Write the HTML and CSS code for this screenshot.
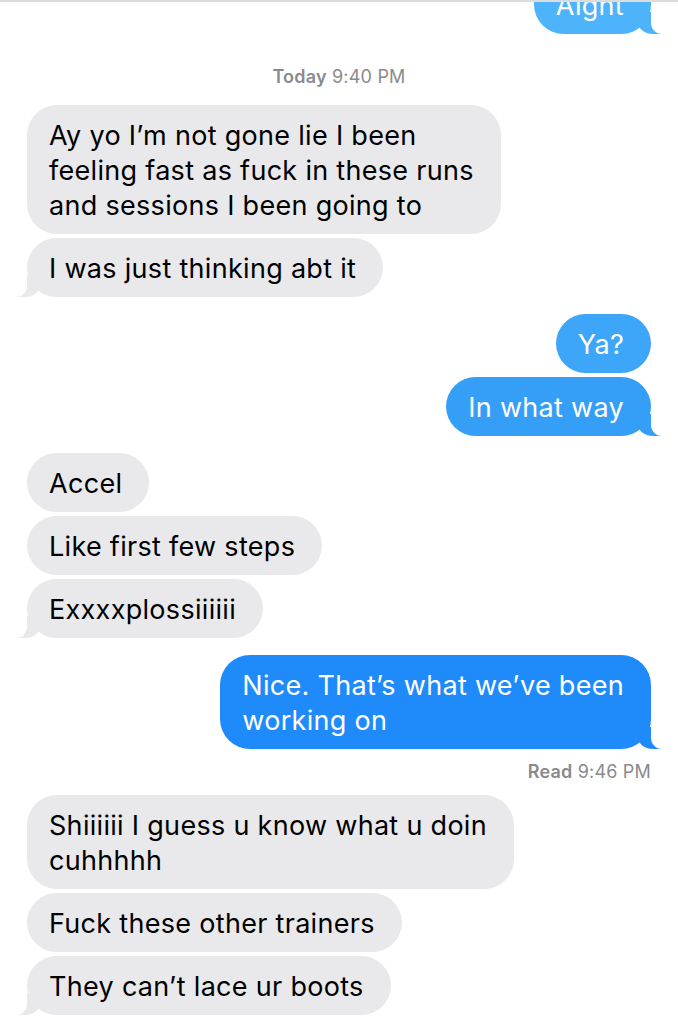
FILE: index.html
```html
<!DOCTYPE html>
<html>
	<head>
		<meta charset="utf-8" />
		<meta name="viewport" content="width=device-width, initial-scale=1.0" />
		<title>Messages</title>
		<link rel="stylesheet" href="styles.css">
	</head>
	<body>
		<div class="screen">
			<div class="chat">
				<!-- earlier -->
				<div class="group">
					<div class="bubble sent tail c1">Aight</div>
				</div>
				<div class="stamp"><b>Today</b> 9:40 PM</div>

				<div class="group">
					<div class="bubble got">Ay yo I’m not gone lie I been<br>feeling fast as fuck in these runs<br>and sessions I been going to</div>
					<div class="bubble got tail">I was just thinking abt it</div>
				</div>

				<div class="group">
					<div class="bubble sent c2">Ya?</div>
					<div class="bubble sent tail c3">In what way</div>
				</div>

				<div class="group">
					<div class="bubble got">Accel</div>
					<div class="bubble got">Like first few steps</div>
					<div class="bubble got tail">Exxxxplossiiiiii</div>
				</div>

				<div class="group">
					<div class="bubble sent tail c4">Nice. That’s what we’ve been<br>working on</div>
				</div>
				<div class="read"><b>Read</b> 9:46 PM</div>

				<div class="group">
					<div class="bubble got">Shiiiiii I guess u know what u doin<br>cuhhhhh</div>
					<div class="bubble got">Fuck these other trainers</div>
					<div class="bubble got tail">They can’t lace ur boots</div>
				</div>
			</div>
		</div>
	</body>
</html>
```

FILE: styles.css
```css
html,
body {
	margin: 0;
	background: #fff;
	font-family: Inter, "Noto Sans", sans-serif;
}
.screen
{
	width: 678px;
	height: 1032px;
	border-top: 2px solid #dcdcdc;
	overflow: hidden;
	box-sizing: border-box;
}
.chat
{
	display: flex;
	flex-direction: column;
	gap: 17px;
	padding: 0 27px;
	margin-top: -27px;
}
.group
{
	display: flex;
	flex-direction: column;
	gap: 4px;
}
.bubble
{
	position: relative;
	font-size: 27px;
	line-height: 35px;
	letter-spacing: 0.3px;
	padding: 13px 27px 11px 22px;
	border-radius: 30px;
	white-space: nowrap;
}
.got
{
	align-self: flex-start;
	background: #e9e9eb;
	color: #000;
}
.sent
{
	align-self: flex-end;
	color: #fff;
	background: #3aa2f7;
}
.c1 { background: #4db4fb; }
.c2 { background: #3ea6f8; }
.c3 { background: #359ef7; }
.c4 { background: #1f8bfb; }

/* tails */
.tail::before,
.tail::after
{
	content: '';
	position: absolute;
	bottom: 0;
}
.sent.tail::before
{
	right: -10px;
	width: 24px;
	height: 22px;
	background: inherit;
	border-bottom-left-radius: 16px 14px;
}
.sent.tail::after
{
	right: -22px;
	width: 22px;
	height: 24px;
	background: #fff;
	border-bottom-left-radius: 11px;
}
.got.tail::before
{
	left: -10px;
	width: 24px;
	height: 22px;
	background: inherit;
	border-bottom-right-radius: 16px 14px;
}
.got.tail::after
{
	left: -22px;
	width: 22px;
	height: 24px;
	background: #fff;
	border-bottom-right-radius: 11px;
}

.stamp,
.read
{
	font-size: 18px;
	line-height: 22px;
	color: #8a8a8e;
	letter-spacing: 0.2px;
}
.stamp b,
.read b
{
	font-weight: 600;
}
.stamp
{
	text-align: center;
	margin: 15px 0 0;
}
.read
{
	text-align: right;
	margin: -5px 0 -5px;
}
```
